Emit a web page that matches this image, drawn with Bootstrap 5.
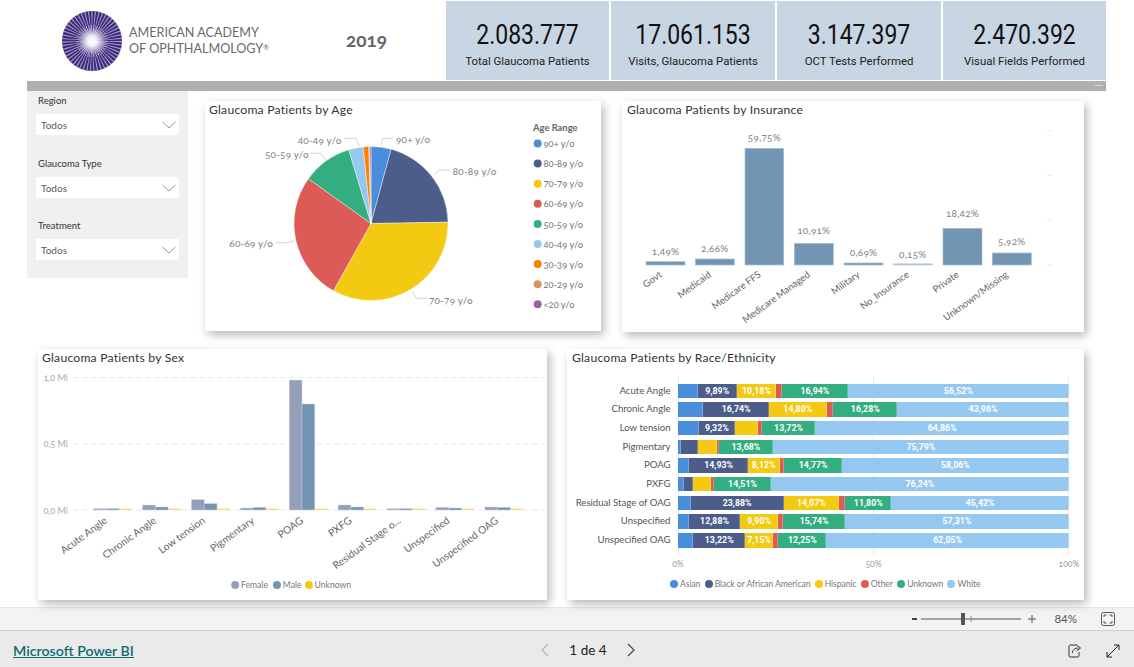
<!DOCTYPE html>
<html lang="es">
<head>
<meta charset="utf-8">
<title>Glaucoma Dashboard</title>
<link href="https://cdn.jsdelivr.net/npm/bootstrap@5.3.0/dist/css/bootstrap.min.css" rel="stylesheet">
<style>
html,body{height:667px;overflow:hidden;background:#fff;}
body{font-family:"Lato","Open Sans","Liberation Sans",sans-serif;color:#444;}
.rp-frame{height:667px;overflow:hidden;}
.rp-head{height:81px;padding-right:28px;}
.rp-logo{margin-left:62px;margin-top:11px;}
.rp-logotext{margin-left:7px;margin-top:25px;font-size:12.6px;line-height:16px;color:#6a6a6a;height:32px;white-space:nowrap;}
.rp-logotext sup{font-size:7px;top:-.5em;}
.rp-year{margin-left:77px;margin-top:30px;font-weight:700;font-size:19px;line-height:20px;color:#666;font-feature-settings:"onum";height:20px;}
.rp-kpis{gap:2px;margin-left:auto;padding-top:1px;}
.rp-kpi{background:#c8d5e2;height:79px;text-align:center;color:#111;width:163px;}
.rp-kpi.w2{width:164px;}
.rp-num{font-family:"Roboto",sans-serif;font-size:28px;line-height:30px;padding-top:19px;transform:scaleX(.82);transform-origin:center;}
.rp-cap{font-family:"Roboto",sans-serif;font-size:11.4px;line-height:14px;margin-top:4px;color:#222;}
.rp-bar{height:10px;background:#b0b0b0;margin-left:27px;width:1079px;position:relative;}
.rp-bar span{position:absolute;right:3px;top:4px;width:8px;height:1px;background:#ddd;}
.rp-row1{height:258px;margin-left:27px;}
.rp-row2{height:251px;margin-left:38px;}
.rp-filters{width:161px;height:187px;background:#f0f0f0;padding:0 9px;font-size:9.5px;color:#333;}
.rp-flabel{height:23px;line-height:20px;padding-left:2px;}
.rp-drop{height:21px;background:#fff;color:#5a5a5a;font-size:10px;padding:1px 2px 0 5px;margin-bottom:19px;}
.rp-drop.m2{margin-bottom:18px;}
.rp-card{background:#fff;border:0;border-radius:0;box-shadow:3px 4px 9px rgba(0,0,0,.28);}
.rp-title{height:20px;line-height:18px;font-size:12.2px;padding-left:5px;color:#333;letter-spacing:.2px;white-space:nowrap;}
.rp-age{width:396px;height:230px;margin:10px 0 0 17px;}
.rp-age .rp-title{padding-left:4px;}
.rp-sex .rp-title{padding-left:4px;}
.rp-ins{width:462px;height:231px;margin:10px 0 0 21px;}
.rp-sex{width:509px;height:251px;}
.rp-race{width:517px;height:251px;margin-left:20px;}
svg text{font-family:"Lato","Open Sans",sans-serif;font-feature-settings:"onum";}
.t-v{font-size:10px;fill:#808080;letter-spacing:.2px;}
.t-x{font-size:9.6px;fill:#666;}
.t-xs{font-size:10.3px;fill:#666;}
.t-y{font-size:9px;fill:#aaa;}
.t-l{font-size:9.4px;fill:#777;}
.t-s{font-size:8.6px;fill:#777;}
.t-h{font-size:9.4px;fill:#666;font-weight:700;}
.b-i{fill:#7295b3;stroke:#a9bfd2;stroke-width:.7;}
.b-f{fill:#959fb9;stroke:#d0d5e0;stroke-width:.5;}
.b-m{fill:#7295b3;stroke:#c4d2df;stroke-width:.5;}
.b-u{fill:#f6dc6e;}
.rc-plot{position:relative;height:187px;padding-top:14.5px;}
.rc-grid{position:absolute;top:7px;bottom:0;width:1px;background:#ececec;}
.rc-row{height:14.5px;margin-bottom:4.2px;position:relative;}
.rc-name{width:103.5px;margin-right:7.5px;text-align:right;font-size:9.6px;line-height:13.5px;color:#555;white-space:nowrap;}
.rc-bars{width:391px;}
.rc-seg{height:14.5px;line-height:14.5px;text-align:center;color:#fff;font-family:"Roboto",sans-serif;font-weight:700;font-size:8.8px;white-space:nowrap;overflow:hidden;box-shadow:inset -1px 0 0 rgba(255,255,255,.25);}
.c1{background:#4a8ddc;}.c2{background:#4c5d8a;}.c3{background:#f3c911;}.c4{background:#dc5b57;}.c5{background:#33ae81;}.c6{background:#95c8f0;}
.rc-axis{margin-left:99px;width:415px;height:18px;font-size:8.6px;line-height:16px;color:#999;font-feature-settings:"onum";}
.rc-axis span{width:24px;text-align:center;}
.rc-legend{margin-left:103px;gap:4.2px;font-size:8.5px;line-height:10px;color:#777;padding-top:5px;white-space:nowrap;}
.rc-dot{width:8px;height:8px;border-radius:50%;display:inline-block;margin-right:2px;}
.rp-zoom{height:24px;margin-top:7px;background:#f3f3f3;border-bottom:1px solid #cfcfcf;border-top:1px solid #e6e6e6;padding-right:19px;font-size:11.5px;color:#555;}
.rp-foot{height:36px;background:#eaeaea;font-size:13.5px;padding:3px 14px 0 13px;position:relative;}
.rp-foot a{color:#0b6a6f;font-weight:600;font-size:14.2px;}
.rp-pager{position:absolute;left:540px;top:0;height:38px;width:96px;color:#222;}
</style>
</head>
<body>
<div class="rp-frame">
  <div class="rp-head d-flex">
    <svg class="rp-logo" width="60" height="60" viewBox="0 0 60 60" role="img" aria-label="logo">
      <defs><radialGradient id="glow"><stop offset="0" stop-color="#fff"/><stop offset=".35" stop-color="#fff" stop-opacity=".9"/><stop offset="1" stop-color="#fff" stop-opacity="0"/></radialGradient></defs>
      <circle cx="30" cy="30" r="30" fill="#3d2a7a"/>
      <circle cx="30" cy="30" r="15.5" fill="none" stroke="#a99ccc" stroke-width="29" stroke-dasharray=".65 1.25"/>
      <circle cx="30" cy="30" r="9" fill="none" stroke="#fff" stroke-width="14" stroke-opacity=".5" stroke-dasharray=".5 1.1"/>
      <circle cx="30" cy="30" r="14" fill="url(#glow)"/>
    </svg>
    <div class="rp-logotext">AMERICAN ACADEMY<br>OF OPHTHALMOLOGY<sup>®</sup></div>
    <div class="rp-year">2019</div>
    <div class="rp-kpis d-flex">
      <div class="rp-kpi"><div class="rp-num">2.083.777</div><div class="rp-cap">Total Glaucoma Patients</div></div>
      <div class="rp-kpi w2"><div class="rp-num">17.061.153</div><div class="rp-cap">Visits, Glaucoma Patients</div></div>
      <div class="rp-kpi w2"><div class="rp-num">3.147.397</div><div class="rp-cap">OCT Tests Performed</div></div>
      <div class="rp-kpi"><div class="rp-num">2.470.392</div><div class="rp-cap">Visual Fields Performed</div></div>
    </div>
  </div>
  <div class="rp-bar"><span></span></div>

  <div class="rp-row1 d-flex align-items-start">
    <div class="rp-filters">
      <div class="rp-flabel">Region</div>
      <div class="rp-drop d-flex align-items-center justify-content-between">Todos<svg width="16" height="8" viewBox="0 0 16 8"><path d="M1.5 1 8 7l6.5-6" fill="none" stroke="#888" stroke-width=".9"/></svg></div>
      <div class="rp-flabel">Glaucoma Type</div>
      <div class="rp-drop m2 d-flex align-items-center justify-content-between">Todos<svg width="16" height="8" viewBox="0 0 16 8"><path d="M1.5 1 8 7l6.5-6" fill="none" stroke="#888" stroke-width=".9"/></svg></div>
      <div class="rp-flabel">Treatment</div>
      <div class="rp-drop d-flex align-items-center justify-content-between">Todos<svg width="16" height="8" viewBox="0 0 16 8"><path d="M1.5 1 8 7l6.5-6" fill="none" stroke="#888" stroke-width=".9"/></svg></div>
    </div>

    <div class="card rp-card rp-age">
      <div class="rp-title">Glaucoma Patients by Age</div>
      <svg width="396" height="210" viewBox="205 121 396 210" class="d-block">
        <g transform="translate(371 223.5)" stroke="#fff" stroke-width=".4">
          <path d="M0 0 0-77A77 77 0 0 1 20.19-74.3Z" fill="#4a8ddc"/>
          <path d="M0 0 20.19-74.3A77 77 0 0 1 76.99-1.34Z" fill="#4c5d8a"/>
          <path d="M0 0 76.99-1.34A77 77 0 0 1-37.57 67.21Z" fill="#f3c911"/>
          <path d="M0 0-37.57 67.21A77 77 0 0 1-62.61-44.82Z" fill="#dc5b57"/>
          <path d="M0 0-62.61-44.82A77 77 0 0 1-22.25-73.71Z" fill="#33ae81"/>
          <path d="M0 0-22.25-73.71A77 77 0 0 1-7.78-76.61Z" fill="#95c8f0"/>
          <path d="M0 0-7.78-76.61A77 77 0 0 1-2.28-76.97Z" fill="#ff7f00"/>
          <path d="M0 0-2.28-76.97A77 77 0 0 1-1.08-76.99Z" fill="#dd915f"/>
          <path d="M0 0-1.08-76.99A77 77 0 0 1 0-77Z" fill="#9a64a0"/>
        </g>
        <g fill="none" stroke="#c8c8c8" stroke-width=".8">
          <path d="M381 145 382.7 138.3H392.7"/>
          <path d="M433.3 175 439.3 170H450"/>
          <path d="M412.3 291.7 416.7 298.3H426.7"/>
          <path d="M294.3 241 287.3 242.7H276"/>
          <path d="M325.7 160 320.7 153.3H310.7"/>
          <path d="M359.3 146.7 356 138.3H344"/>
        </g>
        <g class="t-v">
          <text x="396" y="143">90+ y/o</text>
          <text x="452.7" y="175">80-89 y/o</text>
          <text x="429" y="303.5">70-79 y/o</text>
          <text x="229.3" y="246.7">60-69 y/o</text>
          <text x="265" y="158.3">50-59 y/o</text>
          <text x="297.7" y="144.3">40-49 y/o</text>
        </g>
        <text class="t-h" x="533" y="131">Age Range</text>
        <g>
          <circle cx="537.7" cy="143.5" r="4" fill="#4a8ddc"/><text class="t-l" x="543.5" y="147">90+ y/o</text>
          <circle cx="537.7" cy="163.6" r="4" fill="#4c5d8a"/><text class="t-l" x="543.5" y="167">80-89 y/o</text>
          <circle cx="537.7" cy="183.7" r="4" fill="#f3c911"/><text class="t-l" x="543.5" y="187">70-79 y/o</text>
          <circle cx="537.7" cy="203.8" r="4" fill="#dc5b57"/><text class="t-l" x="543.5" y="207">60-69 y/o</text>
          <circle cx="537.7" cy="223.9" r="4" fill="#33ae81"/><text class="t-l" x="543.5" y="227.5">50-59 y/o</text>
          <circle cx="537.7" cy="244" r="4" fill="#95c8f0"/><text class="t-l" x="543.5" y="247.5">40-49 y/o</text>
          <circle cx="537.7" cy="264.1" r="4" fill="#ff7f00"/><text class="t-l" x="543.5" y="267.5">30-39 y/o</text>
          <circle cx="537.7" cy="284.2" r="4" fill="#dd915f"/><text class="t-l" x="543.5" y="287.5">20-29 y/o</text>
          <circle cx="537.7" cy="304.3" r="4" fill="#9a64a0"/><text class="t-l" x="543.5" y="307.5">&lt;20 y/o</text>
        </g>
      </svg>
    </div>

    <div class="card rp-card rp-ins">
      <div class="rp-title">Glaucoma Patients by Insurance</div>
      <svg width="462" height="211" viewBox="622 121 462 211" class="d-block">
        <g fill="#eee">
          <rect x="1047" y="130.3" width="5" height="1"/><rect x="1047" y="175" width="5" height="1"/><rect x="1047" y="220" width="5" height="1"/><rect x="1047" y="264.5" width="5" height="1"/>
        </g>
        <g class="b-i">
          <rect x="646" y="261.7" width="39" height="3.3"/>
          <rect x="695.3" y="259" width="39" height="6"/>
          <rect x="745" y="148.3" width="38.7" height="116.7"/>
          <rect x="794.3" y="243.3" width="39" height="21.7"/>
          <rect x="844" y="263" width="39" height="2"/>
          <rect x="893.3" y="263.8" width="39" height="1.2" opacity=".7"/>
          <rect x="943" y="228.3" width="39" height="36.7"/>
          <rect x="992.3" y="253" width="39" height="12"/>
        </g>
        <g class="t-v" text-anchor="middle">
          <text x="665.5" y="255">1,49%</text>
          <text x="714.8" y="251.7">2,66%</text>
          <text x="764.4" y="140.7">59,75%</text>
          <text x="813.8" y="234">10,91%</text>
          <text x="863.5" y="255.7">0,69%</text>
          <text x="912.8" y="257.7">0,15%</text>
          <text x="962.5" y="216.7">18,42%</text>
          <text x="1011.8" y="245">5,92%</text>
        </g>
        <g class="t-x" text-anchor="end">
          <text transform="translate(662.5 276) rotate(-36)">Govt</text>
          <text transform="translate(711.8 276) rotate(-36)">Medicaid</text>
          <text transform="translate(761.4 276) rotate(-36)">Medicare FFS</text>
          <text transform="translate(810.8 276) rotate(-36)">Medicare Managed</text>
          <text transform="translate(860.5 276) rotate(-36)">Military</text>
          <text transform="translate(909.8 276) rotate(-36)">No_Insurance</text>
          <text transform="translate(959.5 276) rotate(-36)">Private</text>
          <text transform="translate(1008.8 276) rotate(-36)">Unknown/Missing</text>
        </g>
      </svg>
    </div>
  </div>

  <div class="rp-row2 d-flex align-items-start">
    <div class="card rp-card rp-sex">
      <div class="rp-title">Glaucoma Patients by Sex</div>
      <svg width="509" height="231" viewBox="38 369 509 231" class="d-block">
        <g stroke="#e8e8e8" stroke-dasharray="5 4">
          <path d="M73.5 377.5H544"/><path d="M73.5 443.8H544"/><path d="M73.5 510H544"/>
        </g>
        <g class="t-y">
          <text x="43.4" y="381">1,0 Mi</text><text x="43.4" y="447">0,5 Mi</text><text x="43.4" y="513.5">0,0 Mi</text>
        </g>
        <g class="b-f">
          <rect x="93.6" y="508.7" width="12.8" height="1.3"/>
          <rect x="142.5" y="505" width="12.8" height="5"/>
          <rect x="191.4" y="499.6" width="12.8" height="10.4"/>
          <rect x="240.3" y="508" width="12.8" height="2"/>
          <rect x="289.2" y="380" width="12.8" height="130"/>
          <rect x="338.1" y="505" width="12.8" height="5"/>
          <rect x="387" y="508.7" width="12.8" height="1.3"/>
          <rect x="435.9" y="507.3" width="12.8" height="2.7"/>
          <rect x="484.8" y="507" width="12.8" height="3"/>
        </g>
        <g class="b-m">
          <rect x="106.4" y="508.7" width="12.8" height="1.3"/>
          <rect x="155.3" y="507" width="12.8" height="3"/>
          <rect x="204.2" y="503.6" width="12.8" height="6.4"/>
          <rect x="253.1" y="507.3" width="12.8" height="2.7"/>
          <rect x="302" y="404" width="12.8" height="106"/>
          <rect x="350.9" y="507" width="12.8" height="3"/>
          <rect x="399.8" y="508.7" width="12.8" height="1.3"/>
          <rect x="448.7" y="508" width="12.8" height="2"/>
          <rect x="497.6" y="507.3" width="12.8" height="2.7"/>
        </g>
        <g class="b-u">
          <rect x="119.2" y="508.7" width="12.8" height="1.3"/>
          <rect x="168.1" y="508.7" width="12.8" height="1.3"/>
          <rect x="217" y="508.7" width="12.8" height="1.3"/>
          <rect x="265.9" y="508.7" width="12.8" height="1.3"/>
          <rect x="314.8" y="508.7" width="12.8" height="1.3"/>
          <rect x="363.7" y="508.7" width="12.8" height="1.3"/>
          <rect x="412.6" y="508.7" width="12.8" height="1.3"/>
          <rect x="461.5" y="508.7" width="12.8" height="1.3"/>
          <rect x="510.4" y="508.7" width="12.8" height="1.3"/>
        </g>
        <g class="t-xs" text-anchor="end">
          <text transform="translate(108 522) rotate(-36)">Acute Angle</text>
          <text transform="translate(157 522) rotate(-36)">Chronic Angle</text>
          <text transform="translate(206 522) rotate(-36)">Low tension</text>
          <text transform="translate(255 522) rotate(-36)">Pigmentary</text>
          <text transform="translate(304 522) rotate(-36)">POAG</text>
          <text transform="translate(352.5 522) rotate(-36)">PXFG</text>
          <text transform="translate(401.5 522) rotate(-36)">Residual Stage o...</text>
          <text transform="translate(450.5 522) rotate(-36)">Unspecified</text>
          <text transform="translate(499 522) rotate(-36)">Unspecified OAG</text>
        </g>
        <circle cx="235.2" cy="585" r="4" fill="#959fb9"/><text class="t-s" x="241" y="588">Female</text>
        <circle cx="277" cy="585" r="4" fill="#7295b3"/><text class="t-s" x="282.8" y="588">Male</text>
        <circle cx="308.9" cy="585" r="4" fill="#f3c911"/><text class="t-s" x="314.6" y="588">Unknown</text>
      </svg>
    </div>

    <div class="card rp-card rp-race">
      <div class="rp-title">Glaucoma Patients by Race/Ethnicity</div>
      <div class="rc-plot">
        <span class="rc-grid" style="left:111px"></span><span class="rc-grid" style="left:306px"></span><span class="rc-grid" style="left:501px"></span>
        <div class="rc-row d-flex"><div class="rc-name">Acute Angle</div><div class="rc-bars d-flex">
          <div class="rc-seg c1" style="width:5.1%"></div><div class="rc-seg c2" style="width:9.89%">9,89%</div><div class="rc-seg c3" style="width:10.18%">10,18%</div><div class="rc-seg c4" style="width:1.37%"></div><div class="rc-seg c5" style="width:16.94%">16,94%</div><div class="rc-seg c6" style="width:56.52%">56,52%</div></div></div>
        <div class="rc-row d-flex"><div class="rc-name">Chronic Angle</div><div class="rc-bars d-flex">
          <div class="rc-seg c1" style="width:6.5%"></div><div class="rc-seg c2" style="width:16.74%">16,74%</div><div class="rc-seg c3" style="width:14.8%">14,80%</div><div class="rc-seg c4" style="width:1.72%"></div><div class="rc-seg c5" style="width:16.28%">16,28%</div><div class="rc-seg c6" style="width:43.96%">43,96%</div></div></div>
        <div class="rc-row d-flex"><div class="rc-name">Low tension</div><div class="rc-bars d-flex">
          <div class="rc-seg c1" style="width:5.27%"></div><div class="rc-seg c2" style="width:9.32%">9,32%</div><div class="rc-seg c3" style="width:5.83%"></div><div class="rc-seg c4" style="width:1%"></div><div class="rc-seg c5" style="width:13.72%">13,72%</div><div class="rc-seg c6" style="width:64.86%">64,86%</div></div></div>
        <div class="rc-row d-flex"><div class="rc-name">Pigmentary</div><div class="rc-bars d-flex">
          <div class="rc-seg c1" style="width:.85%"></div><div class="rc-seg c2" style="width:4.2%"></div><div class="rc-seg c3" style="width:4.9%"></div><div class="rc-seg c4" style="width:.58%"></div><div class="rc-seg c5" style="width:13.68%">13,68%</div><div class="rc-seg c6" style="width:75.79%">75,79%</div></div></div>
        <div class="rc-row d-flex"><div class="rc-name">POAG</div><div class="rc-bars d-flex">
          <div class="rc-seg c1" style="width:2.92%"></div><div class="rc-seg c2" style="width:14.93%">14,93%</div><div class="rc-seg c3" style="width:8.12%">8,12%</div><div class="rc-seg c4" style="width:1.2%"></div><div class="rc-seg c5" style="width:14.77%">14,77%</div><div class="rc-seg c6" style="width:58.06%">58,06%</div></div></div>
        <div class="rc-row d-flex"><div class="rc-name">PXFG</div><div class="rc-bars d-flex">
          <div class="rc-seg c1" style="width:1.6%"></div><div class="rc-seg c2" style="width:2.15%"></div><div class="rc-seg c3" style="width:4.8%"></div><div class="rc-seg c4" style="width:.7%"></div><div class="rc-seg c5" style="width:14.51%">14,51%</div><div class="rc-seg c6" style="width:76.24%">76,24%</div></div></div>
        <div class="rc-row d-flex"><div class="rc-name">Residual Stage of OAG</div><div class="rc-bars d-flex">
          <div class="rc-seg c1" style="width:3.2%"></div><div class="rc-seg c2" style="width:23.88%">23,88%</div><div class="rc-seg c3" style="width:14.07%">14,07%</div><div class="rc-seg c4" style="width:1.63%"></div><div class="rc-seg c5" style="width:11.8%">11,80%</div><div class="rc-seg c6" style="width:45.42%">45,42%</div></div></div>
        <div class="rc-row d-flex"><div class="rc-name">Unspecified</div><div class="rc-bars d-flex">
          <div class="rc-seg c1" style="width:2.9%"></div><div class="rc-seg c2" style="width:12.88%">12,88%</div><div class="rc-seg c3" style="width:9.9%">9,90%</div><div class="rc-seg c4" style="width:1.27%"></div><div class="rc-seg c5" style="width:15.74%">15,74%</div><div class="rc-seg c6" style="width:57.31%">57,31%</div></div></div>
        <div class="rc-row d-flex"><div class="rc-name">Unspecified OAG</div><div class="rc-bars d-flex">
          <div class="rc-seg c1" style="width:3.94%"></div><div class="rc-seg c2" style="width:13.22%">13,22%</div><div class="rc-seg c3" style="width:7.15%">7,15%</div><div class="rc-seg c4" style="width:1.39%"></div><div class="rc-seg c5" style="width:12.25%">12,25%</div><div class="rc-seg c6" style="width:62.05%">62,05%</div></div></div>
      </div>
      <div class="rc-axis d-flex justify-content-between"><span>0%</span><span>50%</span><span>100%</span></div>
      <div class="rc-legend d-flex">
        <span class="d-flex align-items-center"><i class="rc-dot c1"></i>Asian</span>
        <span class="d-flex align-items-center"><i class="rc-dot c2"></i>Black or African American</span>
        <span class="d-flex align-items-center"><i class="rc-dot c3"></i>Hispanic</span>
        <span class="d-flex align-items-center"><i class="rc-dot c4"></i>Other</span>
        <span class="d-flex align-items-center"><i class="rc-dot c5"></i>Unknown</span>
        <span class="d-flex align-items-center"><i class="rc-dot c6"></i>White</span>
      </div>
    </div>
  </div>

  <div class="rp-zoom d-flex align-items-center justify-content-end">
    <svg width="126" height="16" viewBox="0 0 126 16" class="me-3">
      <rect x="0" y="7" width="5" height="2" fill="#444"/>
      <path d="M9 8H109" stroke="#555"/><rect x="49" y="2" width="4" height="12" fill="#555"/><path d="M59 5v6" stroke="#888"/>
      <path d="M116 8h8M120 4v8" stroke="#555"/>
    </svg>
    <span class="me-3">84%</span>
    <svg width="14" height="14" viewBox="0 0 14 14" class="ms-2"><rect x=".5" y=".5" width="13" height="13" rx="2" fill="none" stroke="#555"/><path d="M3 5V3H5.5M8.5 3H11v2M11 9v2H8.500M5.500 11H3V9" fill="none" stroke="#555"/></svg>
  </div>
  <div class="rp-foot d-flex align-items-center justify-content-between">
    <a href="#">Microsoft Power BI</a>
    <div class="rp-pager d-flex align-items-center justify-content-between">
      <svg width="10" height="14" viewBox="0 0 10 14"><path d="M8 1 2 7l6 6" fill="none" stroke="#b5b5b5" stroke-width="1.2"/></svg>
      <span>1 de 4</span>
      <svg width="10" height="14" viewBox="0 0 10 14"><path d="M2 1l6 6-6 6" fill="none" stroke="#444" stroke-width="1.2"/></svg>
    </div>
    <div class="d-flex align-items-center gap-4">
      <svg width="14" height="15" viewBox="0 0 14 15"><path d="M9 2H2.500A1.500 1.500 0 0 0 1 3.500v9A1.500 1.500 0 0 0 2.500 14h7a1.500 1.500 0 0 0 1.500-1.500V9" fill="none" stroke="#333"/><path d="M4.500 10c0-3 2-5 6-5M8.500 2l4 3-4 3" fill="none" stroke="#333"/></svg>
      <svg width="14" height="14" viewBox="0 0 14 14"><path d="M8 1h5v5M13 1 1 13M1 8v5h5" fill="none" stroke="#222"/></svg>
    </div>
  </div>
</div>
<script src="https://cdn.jsdelivr.net/npm/bootstrap@5.3.0/dist/js/bootstrap.bundle.min.js"></script>
</body>
</html>
